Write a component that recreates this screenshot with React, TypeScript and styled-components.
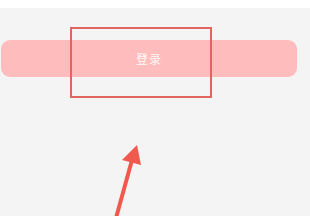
import React from 'react';
import styled, { createGlobalStyle } from 'styled-components';

const GlobalStyle = createGlobalStyle`
  html, body {
    margin: 0;
    padding: 0;
    background: #f5f5f5;
  }
  body {
    font-family: "Noto Sans CJK SC", "Noto Sans", sans-serif;
  }
`;

const Page = styled.div`
  position: relative;
  width: 310px;
  height: 216px;
  overflow: hidden;
  background: #f5f4f4;
`;

const TopStrip = styled.div`
  height: 8px;
  background: #ffffff;
`;

const Body = styled.div`
  padding: 32px 13px 0 1px;
`;

const LoginButton = styled.button`
  display: flex;
  align-items: center;
  justify-content: center;
  width: 100%;
  height: 37px;
  border: none;
  border-radius: 9px;
  background: #ffbcbd;
  color: rgba(255, 255, 255, 0.92);
  font-family: "Noto Sans CJK SC", "Noto Sans", sans-serif;
  font-size: 12px;
  letter-spacing: 1px;
  cursor: pointer;
`;

const Highlight = styled.div`
  position: absolute;
  left: 70px;
  top: 27px;
  width: 138px;
  height: 67px;
  border: 2px solid #e0665f;
  pointer-events: none;
`;

const Arrow = styled.svg`
  position: absolute;
  left: 0;
  top: 0;
  pointer-events: none;
`;

export default function App() {
  return (
    <>
      <GlobalStyle />
      <Page>
        <TopStrip />
        <Body>
          <LoginButton>登录</LoginButton>
        </Body>
        <Highlight />
        <Arrow width="310" height="216" viewBox="0 0 310 216">
          <line x1="116" y1="218" x2="132" y2="160" stroke="#f05a4e" strokeWidth="4" />
          <polygon points="137,145 122,160 141,165" fill="#f05a4e" />
        </Arrow>
      </Page>
    </>
  );
}
